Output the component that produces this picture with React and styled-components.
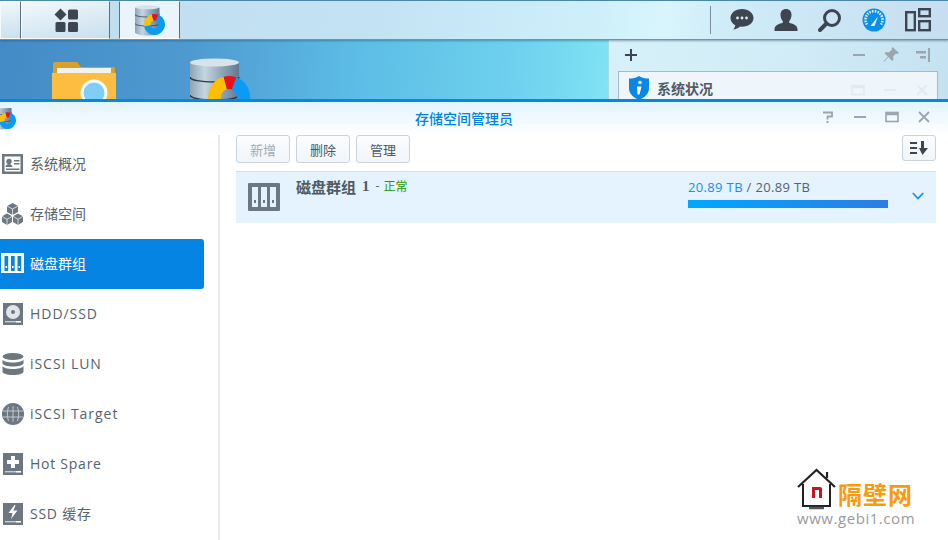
import React from "react";
import styled, { createGlobalStyle } from "styled-components";

const Global = createGlobalStyle`
  html, body { margin: 0; padding: 0; background: #fff; }
  body { font-family: "Open Sans", "Noto Sans CJK SC", sans-serif; }
  * { box-sizing: border-box; }
`;
const Page = styled.div`
  width: 948px; height: 540px; overflow: hidden; position: relative;
  display: flex; flex-direction: column; background: #fff;
`;
const TaskBar = styled.div`
  height: 40px; flex: none; display: flex; align-items: stretch;
  border-top: 1px solid #4a88a8; border-bottom: 1px solid #6a95ae;
  background: linear-gradient(100deg, #c0dcee 0%, #c3e3f4 40%, #cdeffa 62%, #d8f5fc 70%, #d0ecf8 76%, #c6def0 100%);
  box-shadow: 0 1px 2px rgba(30,70,100,.45);
  position: relative; z-index: 2;
`;
const TaskButton = styled.div`
  width: ${p => p.$w}px; margin-right: ${p => p.$mr || 0}px;
  display: flex; align-items: center; justify-content: center;
  border: 1px solid ${p => p.$active ? "#fff" : "#f4fafd"};
  border-left-color: ${p => p.$active ? "#5d6f7c" : "#f4fafd"};
  border-right-color: #5d6f7c;
  background: ${p => p.$active ? "#e9f5fb" : "linear-gradient(170deg,#f2f8fc,#c9dfed)"};
`;
const TrayArea = styled.div`
  margin-left: auto; display: flex; align-items: center; padding-right: 15px;
`;
const TraySep = styled.div`
  width: 1px; height: 28px; background: #7c8f9c; margin-right: 2px;
`;
const TrayIcon = styled.div`
  width: 30px; height: 30px; margin-left: 14px;
  display: flex; align-items: center; justify-content: center;
`;
const Desktop = styled.div`
  height: 59px; flex: none; position: relative; overflow: hidden;
  display: flex;
  background: linear-gradient(95deg, #438bc6 0%, #4e9ad0 20%, #5dbde6 38%, #70d2ee 55%, #80e2f3 64%);
`;
const DeskIcons = styled.div`
  width: 608px; flex: none; display: flex; padding-left: 52px;
`;
const DeskIcon = styled.div`
  margin-top: ${p => p.$mt}px; margin-right: ${p => p.$mr || 0}px; height: 64px;
`;
const WidgetPanel = styled.div`
  flex: 1; display: flex; flex-direction: column; padding: 0 10px 0 9px;
  border-left: 1px solid #a8d8e8;
  background: linear-gradient(110deg, #d7f1fa 0%, #d2ecf7 50%, #c4e1f1 100%);
`;
const WidgetTools = styled.div`
  height: 31px; flex: none; display: flex; align-items: center; padding: 0 8px 2px 6px;
`;
const WidgetToolsRight = styled.div`
  margin-left: auto; display: flex; align-items: center; gap: 17px;
`;
const WidgetCard = styled.div`
  height: 40px; flex: none; display: flex; align-items: flex-start; gap: 8px;
  padding: 4px 8px 0 10px;
  border: 1px solid #a9b8c6; background: #eef6fc;
`;
const WidgetTitle = styled.span`
  font: bold 14px/25px "Noto Sans CJK SC", sans-serif; color: #505a64;
`;
const FaintTools = styled.div`
  margin-left: auto; display: flex; gap: 18px; padding-top: 7px; opacity: .13;
`;
const Win = styled.div`
  flex: 1; display: flex; flex-direction: column; min-height: 0;
  border-top: 3px solid #0587e6; position: relative; z-index: 3;
`;
const TitleBar = styled.div`
  height: 33px; flex: none; position: relative;
  display: flex; align-items: center; justify-content: center;
  padding: 0 20px 2px 0;
  background: linear-gradient(180deg, #e2f3fe 0%, #f6fbfe 70%, #fff 100%);
`;
const TitleText = styled.div`
  font: 500 14px/1 "Noto Sans CJK SC", sans-serif; color: #0083e0;
`;
const AppIcon = styled.div`
  position: absolute; left: -8px; top: 6px; width: 24px; height: 24px; overflow: hidden;
  & > svg { display: block; margin-top: -3px; }
`;
const WinControls = styled.div`
  position: absolute; right: 17px; top: 8px; display: flex; gap: 18px;
`;
const Body = styled.div`
  flex: 1; display: flex; min-height: 0;
`;
const Sidebar = styled.nav`
  width: 220px; flex: none; padding: 4px 14px 0 0;
  border-right: 2px solid #e6e8ea;
`;
const NavItem = styled.div`
  height: 50px; display: flex; align-items: center; padding-left: 1px;
  border-radius: 0 3px 3px 0;
  background: ${p => p.$active ? "#0584e3" : "transparent"};
  color: ${p => p.$active ? "#fff" : "#56626e"};
`;
const NavIconBox = styled.div`
  width: 23px; height: 22px; flex: none; margin-right: 6px;
`;
const NavLabel = styled.span`
  font: 14px/1 "Open Sans", "Noto Sans CJK SC", sans-serif;
  letter-spacing: ${p => p.$sp || 0}px;
`;
const Main = styled.main`
  flex: 1; padding: 0 12px 0 16px; min-width: 0;
`;
const Toolbar = styled.div`
  height: 36px; display: flex; align-items: flex-start; gap: 6px;
`;
const Btn = styled.button`
  width: 54px; height: 28px; padding: 0; border-radius: 3px;
  border: 1px solid #c8d3de; background: linear-gradient(180deg,#fbfdfe,#f1f5f9);
  font: 13px/1 "Noto Sans CJK SC", sans-serif;
  color: ${p => p.$disabled ? "#a2abb4" : "#4e5963"};
`;
const SortBtn = styled(Btn)`
  width: 34px; height: 26px; margin-left: auto; display: flex; align-items: center; justify-content: center;
`;
const Row = styled.div`
  height: 52px; display: flex; background: #e4f3fe; border-top: 1px solid #d4dfe9;
  padding: 11px 0 0 12px;
`;
const RowIcon = styled.div`
  width: 32px; height: 28px; flex: none; margin-right: 16px;
`;
const RowTitle = styled.div`
  display: flex; align-items: center; height: 10px; margin-top: -2px; white-space: nowrap;
`;
const RowName = styled.span`
  font: bold 15px/1 "Noto Sans CJK SC", sans-serif; color: #4f5a64; margin-right: 6px;
`;
const RowNum = styled.span`
  font: bold 15px/1 "Liberation Serif", serif; color: #4f5a64; margin-right: 6px;
`;
const RowDash = styled.span`
  font: 12px/1 "Open Sans", sans-serif; color: #56626e; margin-right: 4px;
`;
const RowStatus = styled.span`
  font: 12px/1 "Noto Sans CJK SC", sans-serif; color: #1f9c00;
`;
const Usage = styled.div`
  margin: -3px 24px 0 auto; width: 200px; flex: none;
`;
const UsageText = styled.div`
  font: 13px/14px "Open Sans", sans-serif; color: #56626e; white-space: nowrap; letter-spacing: .35px;
`;
const UsageUsed = styled.span`color: #1a8fe8;`;
const Bar = styled.div`
  height: 8px; margin-top: 6px; background: linear-gradient(90deg,#00a8ff,#2c7de4);
`;
const Chevron = styled.div`
  width: 12px; margin: 9px 12px 0 0; flex: none;
`;
const Mark = styled.div`
  position: absolute; left: 797px; top: 468px; width: 124px;
`;
const MarkTop = styled.div`
  display: flex; align-items: flex-end; gap: 2px;
`;
const MarkName = styled.div`
  font: bold 24px/26px "Noto Sans CJK SC", sans-serif; color: #f79a0e; margin-bottom: 3px; letter-spacing: 1px; white-space: nowrap;
`;
const MarkUrl = styled.div`
  font: 15px/18px "Open Sans", sans-serif; color: #9a9a9a; white-space: nowrap; margin-top: -1px; letter-spacing: .55px;
`;

const G = "#6c7782";

const polar = (a, r) => {
  const t = (a - 90) * Math.PI / 180;
  return [39 + r * Math.cos(t), 39 + r * Math.sin(t)];
};
const arc = (a, b, r = 14.5) => {
  const [x1, y1] = polar(a, r);
  const [x2, y2] = polar(b, r);
  return `M${x1.toFixed(2)} ${y1.toFixed(2)}A${r} ${r} 0 ${b - a > 180 ? 1 : 0} 1 ${x2.toFixed(2)} ${y2.toFixed(2)}`;
};

const DbIcon = ({ s }) => (
  <svg width={s} height={s * 62 / 60} viewBox="0 0 60 62">
    <defs>
      <linearGradient id={`cy${s}`} x1="0" x2="1" y1="0" y2="0">
        <stop offset="0" stopColor="#8da4b6" />
        <stop offset=".3" stopColor="#c5d6e2" />
        <stop offset=".65" stopColor="#8ea5b8" />
        <stop offset="1" stopColor="#5f7a92" />
      </linearGradient>
    </defs>
    <path d="M0 5v50c0 3 11 6 24.500 6S49 58 49 55V5z" fill={`url(#cy${s})`} />
    <ellipse cx="24.500" cy="4.500" rx="24.500" ry="4" fill="#d8e2ea" />
    <path d="M0 19c0 3 11 5 24.500 5S49 22 49 19M0 37c0 3 11 5 24.500 5S49 40 49 37" fill="none" stroke="#2c3a46" strokeWidth="1.500" />
    <path d={arc(20, 260)} fill="none" stroke="#0a9cf5" strokeWidth="13" />
    <path d={arc(260, 345)} fill="none" stroke="#ffbe00" strokeWidth="13" />
    <path d={arc(345, 380)} fill="none" stroke="#e9121c" strokeWidth="13" />
  </svg>
);

const FolderIcon = () => (
  <svg width="64" height="64" viewBox="0 0 64 64">
    <path d="M1 3a2 2 0 0 1 2-2h22l4 5h32a2 2 0 0 1 2 2v6H1z" fill="#d9a02e" />
    <rect x="5" y="7" width="54" height="6" fill="#f2f2ee" />
    <path d="M0 12h64v50H0z" fill="#fdbd41" />
    <circle cx="42" cy="32" r="12" fill="#7fcdfb" stroke="#fff" strokeWidth="3" />
  </svg>
);

const AppsIcon = () => (
  <svg width="24" height="24" viewBox="0 0 24 24" fill="#3d4650">
    <path d="M6.500 0.500 12.500 6.500 6.500 12.500 0.500 6.500z" />
    <rect x="14" y="1.500" width="10" height="10" rx="1.500" />
    <rect x="1.500" y="14" width="10" height="10" rx="1.500" />
    <rect x="14" y="14" width="10" height="10" rx="1.500" />
  </svg>
);
const ChatIcon = () => (
  <svg width="24" height="22" viewBox="0 0 24 22">
    <path d="M12 0C5.400 0 .5 3.900.5 9c0 3.100 1.900 5.700 4.800 7.300-.2 1.500-1 3-2 4.200 2.400-.2 5-1.300 6.600-3 .7.1 1.400.2 2.100.2 6.600 0 11.500-3.800 11.500-8.700S18.600 0 12 0z" fill="#3d4650" />
    <circle cx="7.500" cy="9" r="1.400" fill="#dfeaf2" /><circle cx="12" cy="9" r="1.400" fill="#dfeaf2" /><circle cx="16.500" cy="9" r="1.400" fill="#dfeaf2" />
  </svg>
);
const UserIcon = () => (
  <svg width="24" height="22" viewBox="0 0 24 22" fill="#3d4650">
    <path d="M12 0c3.500 0 5.500 2.400 5.500 5.800 0 2.600-1 5-2.300 6.300v1.600c3 1 8.300 2 8.300 6.800V22H.5v-1.500c0-4.800 5.300-5.800 8.300-6.800v-1.600C7.500 10.800 6.500 8.400 6.500 5.800 6.500 2.400 8.500 0 12 0z" />
  </svg>
);
const SearchIcon = () => (
  <svg width="24" height="24" viewBox="0 0 24 24" fill="none" stroke="#3d4650">
    <circle cx="14" cy="10" r="7.500" strokeWidth="3" />
    <path d="M8.500 15.500 2 22" strokeWidth="4" strokeLinecap="round" />
  </svg>
);
const GaugeIcon = () => (
  <svg width="24" height="24" viewBox="0 0 24 24">
    <circle cx="12" cy="12" r="11.500" fill="#0c8fe8" />
    <path d="M5 16.500A8.500 8.500 0 1 1 19 16.500" fill="none" stroke="#e9f6fe" strokeWidth="2.600" strokeDasharray="1.500 1.200" />
    <path d="M8.500 18 16 8.500 12.500 18z" fill="#e9f6fe" />
  </svg>
);
const LayoutIcon = () => (
  <svg width="26" height="24" viewBox="0 0 26 24" fill="none" stroke="#3d4650" strokeWidth="2.400">
    <rect x="1.200" y="4.200" width="8.600" height="18" />
    <rect x="14.200" y="1.200" width="10.600" height="7" />
    <rect x="14.200" y="13.200" width="10.600" height="9" />
  </svg>
);
const PlusIcon = () => (
  <svg width="14" height="14" viewBox="0 0 14 14"><path d="M7 1v12M1 7h12" stroke="#3d4650" strokeWidth="2" /></svg>
);
const MinIcon = () => (
  <svg width="14" height="14" viewBox="0 0 14 14"><path d="M1 7h12" stroke="#9aa5ae" strokeWidth="2" /></svg>
);
const PinIcon = () => (
  <svg width="16" height="16" viewBox="0 0 16 16" fill="#9aa5ae"><path d="M9.500 0 16 6l-2 1-1-.5-3 3 .5 3-1.500 1.500L5.500 10 1 15l-.5-.5L5 9.500 1.500 6.500 3 5l3 .5 3-3-.5-1z" /></svg>
);
const CollapseIcon = () => (
  <svg width="14" height="14" viewBox="0 0 14 14"><path d="M0 3h10v2.500H0zM4 8h6v2.500H4z" fill="#9aa5ae" /><path d="M13 0v14" stroke="#9aa5ae" strokeWidth="2" /></svg>
);
const HelpIcon = () => (
  <svg width="14" height="14" viewBox="0 0 14 14" fill="none"><path d="M2 2.500h9v4H6.500v3" stroke="#9aa5ae" strokeWidth="1.800" /><path d="M5.500 11h2v2h-2z" fill="#9aa5ae" /></svg>
);
const MaxIcon = () => (
  <svg width="14" height="14" viewBox="0 0 14 14" fill="none"><rect x="1" y="2.500" width="12" height="9" stroke="#9aa5ae" strokeWidth="1.600" /><path d="M1 4h12" stroke="#9aa5ae" strokeWidth="2.500" /></svg>
);
const CloseIcon = () => (
  <svg width="14" height="14" viewBox="0 0 14 14"><path d="M2 2l10 10M12 2 2 12" stroke="#9aa5ae" strokeWidth="1.800" /></svg>
);
const ShieldIcon = () => (
  <svg width="20" height="24" viewBox="0 0 20 24">
    <path d="M10 0c3 2 6 2.500 10 2.500V12c0 6-4.500 9.500-10 12C4.500 21.500 0 18 0 12V2.500C4 2.500 7 2 10 0z" fill="#0a86e6" />
    <circle cx="11" cy="6.500" r="1.800" fill="#fff" />
    <path d="M8 10.500h4.500l-2 8H8.500z" fill="#fff" />
  </svg>
);

const NavSvg = ({ children, color }) => (
  <svg width="23" height="22" viewBox="0 0 23 22" fill={color} style={{ display: "block" }}>{children}</svg>
);
const NavOverview = ({ c }) => (
  <NavSvg color={c}>
    <path fillRule="evenodd" d="M1 1h21v20H1zM3.500 3.500v15h16v-15z" />
    <circle cx="8" cy="8.500" r="2.700" /><path d="M4.500 14c0-2 2-3 3.500-3s3.500 1 3.500 3zM13 7h5.500v1.600H13zM13 10h5.500v1.600H13zM5 15.500h13.500v1.500H5z" />
  </NavSvg>
);
const NavCubes = ({ c }) => (
  <NavSvg color={c}>
    <path d="M11.500 0 17 3v6l-5.500 3L6 9V3zM6 10.500l5 2.800V19l-5 3-5-3v-5.700zM17 10.500l5 2.800V19l-5 3-5-3v-5.700z" />
    <path d="M6 3l5.500 3L17 3M1 13.300l5 3 5-3M12 13.300l5 3 5-3M11.500 6v6M6 16.300V22M17 16.300V22" stroke="#fff" strokeWidth=".7" fill="none" />
  </NavSvg>
);
const NavVol = ({ c, bg }) => (
  <NavSvg color={c}>
    <rect x="0" y="0" width="23" height="20" />
    <g fill={bg}>
      <rect x="3.500" y="3" width="3.700" height="15" /><rect x="10" y="3" width="3.700" height="15" /><rect x="16.500" y="3" width="3.700" height="15" />
    </g>
    <rect x="4.500" y="13" width="1.600" height="2" /><rect x="11" y="13" width="1.600" height="2" /><rect x="17.500" y="13" width="1.600" height="2" />
  </NavSvg>
);
const NavDisk = ({ c }) => (
  <NavSvg color={c}>
    <path d="M2 0h20v22H2z" />
    <circle cx="12" cy="9" r="7" fill="#e3e6e9" /><circle cx="12" cy="9" r="2" fill={c} />
    <rect x="4" y="18" width="16" height="1.400" fill="#c8cdd2" />
    <rect x="15" y="18" width="5" height="1.400" fill="#fff" />
  </NavSvg>
);
const NavLun = ({ c }) => (
  <NavSvg color={c}>
    <ellipse cx="12" cy="3.500" rx="10.500" ry="3.500" />
    <path d="M1.500 6.500c1 2 5 3 10.500 3s9.500-1 10.500-3v4c-1 2-5 3-10.500 3s-9.500-1-10.500-3zM1.500 13c1 2 5 3 10.500 3s9.500-1 10.500-3v5.500C22.500 20.500 18 22 12 22S1.500 20.500 1.500 18.500z" />
  </NavSvg>
);
const NavGlobe = ({ c }) => (
  <NavSvg color={c}>
    <circle cx="12" cy="11" r="11" />
    <path d="M2 8h20M2 14h20M12 3v16M7.500 4c-1.500 4-1.500 10 0 14M16.500 4c1.500 4 1.500 10 0 14" stroke="#d5dade" strokeWidth=".8" fill="none" />
  </NavSvg>
);
const NavSpare = ({ c }) => (
  <NavSvg color={c}>
    <path fillRule="evenodd" d="M2 0h20v22H2zM10 3v4H6v4h4v4h4v-4h4V7h-4V3z" />
    <rect x="4" y="18" width="16" height="1.400" fill="#c8cdd2" />
    <rect x="15" y="18" width="5" height="1.400" fill="#fff" />
  </NavSvg>
);
const NavCache = ({ c }) => (
  <NavSvg color={c}>
    <path fillRule="evenodd" d="M2 0h20v22H2zM13.500 2 7.500 10h4l-1.500 6 6.500-8.500h-4l2-5.500z" />
    <rect x="4" y="18" width="16" height="1.400" fill="#c8cdd2" />
    <rect x="15" y="18" width="5" height="1.400" fill="#fff" />
  </NavSvg>
);

const nav = [
  ["系统概况", NavOverview], ["存储空间", NavCubes], ["磁盘群组", NavVol, true],
  ["HDD/SSD", NavDisk, false, .95], ["iSCSI LUN", NavLun, false, .95], ["iSCSI Target", NavGlobe, false, .95],
  ["Hot Spare", NavSpare, false, .75], ["SSD 缓存", NavCache, false, .75],
];

export default function App() {
  return (
    <Page>
      <Global />
      <TaskBar>
        <TaskButton $w={21} />
        <TaskButton $w={89} $mr={9}><AppsIcon /></TaskButton>
        <TaskButton $w={61} $active><DbIcon s={30} /></TaskButton>
        <TrayArea>
          <TraySep />
          <TrayIcon><ChatIcon /></TrayIcon>
          <TrayIcon><UserIcon /></TrayIcon>
          <TrayIcon><SearchIcon /></TrayIcon>
          <TrayIcon><GaugeIcon /></TrayIcon>
          <TrayIcon><LayoutIcon /></TrayIcon>
        </TrayArea>
      </TaskBar>
      <Desktop>
        <DeskIcons>
          <DeskIcon $mt={21} $mr={74}><FolderIcon /></DeskIcon>
          <DeskIcon $mt={18}><DbIcon s={60} /></DeskIcon>
        </DeskIcons>
        <WidgetPanel>
          <WidgetTools>
            <PlusIcon />
            <WidgetToolsRight><MinIcon /><PinIcon /><CollapseIcon /></WidgetToolsRight>
          </WidgetTools>
          <WidgetCard>
            <ShieldIcon />
            <WidgetTitle>系统状况</WidgetTitle>
            <FaintTools><MaxIcon /><MinIcon /><CloseIcon /></FaintTools>
          </WidgetCard>
        </WidgetPanel>
      </Desktop>
      <Win>
        <TitleBar>
          <AppIcon><DbIcon s={24} /></AppIcon>
          <TitleText>存储空间管理员</TitleText>
          <WinControls><HelpIcon /><MinIcon /><MaxIcon /><CloseIcon /></WinControls>
        </TitleBar>
        <Body>
          <Sidebar>
            {nav.map(([label, I, active, sp]) => (
              <NavItem key={label} $active={active}>
                <NavIconBox><I c={active ? "#fff" : G} bg={active ? "#0584e3" : "#fff"} /></NavIconBox>
                <NavLabel $sp={sp}>{label}</NavLabel>
              </NavItem>
            ))}
          </Sidebar>
          <Main>
            <Toolbar>
              <Btn $disabled>新增</Btn>
              <Btn>删除</Btn>
              <Btn>管理</Btn>
              <SortBtn>
                <svg width="18" height="14" viewBox="0 0 18 14" fill="#3d4650">
                  <path d="M0 1h7v2H0zM0 6h7v2H0zM0 11h7v2H0zM11 0h3v7h4l-5.500 7L9 7h2z" />
                </svg>
              </SortBtn>
            </Toolbar>
            <Row>
              <RowIcon>
                <svg width="32" height="28" viewBox="0 0 32 28" fill={G} style={{ display: "block" }}>
                  <rect width="32" height="28" rx="1" />
                  <g fill="#e3f3fe"><rect x="4" y="4" width="6" height="20" /><rect x="13" y="4" width="6" height="20" /><rect x="22" y="4" width="6" height="20" /></g>
                  <rect x="6" y="17" width="2" height="3" /><rect x="15" y="17" width="2" height="3" /><rect x="24" y="17" width="2" height="3" />
                </svg>
              </RowIcon>
              <RowTitle>
                <RowName>磁盘群组</RowName><RowNum>1</RowNum><RowDash>-</RowDash><RowStatus>正常</RowStatus>
              </RowTitle>
              <Usage>
                <UsageText><UsageUsed>20.89 TB</UsageUsed> / 20.89 TB</UsageText>
                <Bar />
              </Usage>
              <Chevron>
                <svg width="12" height="8" viewBox="0 0 12 8" fill="none" style={{ display: "block" }}><path d="M.8 1 6 6.500 11.200 1" stroke="#1a8fe8" strokeWidth="1.800" /></svg>
              </Chevron>
            </Row>
          </Main>
        </Body>
      </Win>
      <Mark>
        <MarkTop>
          <svg width="39" height="42" viewBox="0 0 39 42" style={{ flex: "none" }}>
            <path d="M1 19 19.500 2 38 19M30 10V4" fill="none" stroke="#222" strokeWidth="2.200" />
            <path d="M6 16v22h27V16" fill="none" stroke="#222" strokeWidth="2" />
            <path d="M12 40h15" stroke="#555" strokeWidth="2.500" />
            <path d="M15 30V19h8q2 0 2 2v9h-3v-8h-4v8z" fill="#c9141c" />
          </svg>
          <MarkName>隔壁网</MarkName>
        </MarkTop>
        <MarkUrl>www.gebi1.com</MarkUrl>
      </Mark>
    </Page>
  );
}
